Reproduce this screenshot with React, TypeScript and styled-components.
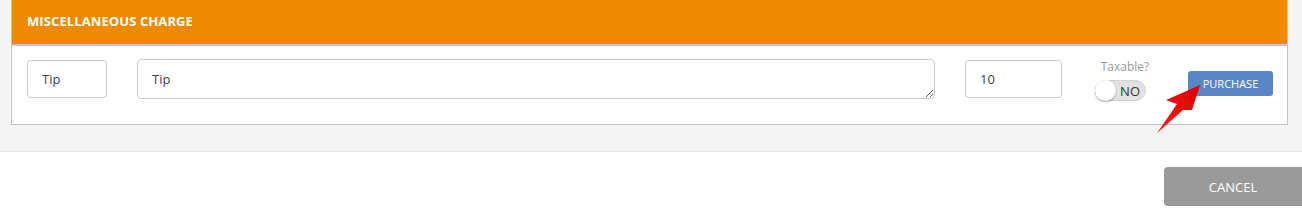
import styled, { createGlobalStyle } from 'styled-components';

const GlobalStyle = createGlobalStyle`
    html, body {
        margin: 0;
        padding: 0;
        background: #ffffff;
        font-family: 'Open Sans', 'Liberation Sans', sans-serif;
    }
`;

const Page = styled.div`
    position: relative;
    width: 1302px;
    height: 218px;
    overflow: hidden;
`;

const Section = styled.div`
    background: #f4f4f4;
    padding: 0 14px 26px 11px;
    border-bottom: 1px solid #e6e6e6;
`;

const Panel = styled.div`
    background: #ffffff;
    border: 1px solid #c4c4c4;
    border-top: none;
`;

const Header = styled.div`
    box-sizing: border-box;
    height: 46px;
    background: #ef8900;
    border-bottom: 2px solid #c4c4c4;
    display: flex;
    align-items: center;
    padding: 0 15px 3px;
    color: #ffffff;
    font-size: 13px;
    font-weight: 700;
    letter-spacing: 0.1px;
`;

const Row = styled.div`
    display: flex;
    align-items: flex-start;
    padding: 13px 14px 23px 15px;

    & > * {
        flex-shrink: 0;
    }
`;

const TextInput = styled.input<{ $width: number; $ml?: number }>`
    box-sizing: border-box;
    width: ${(p) => p.$width}px;
    height: 38px;
    margin-top: 1px;
    margin-left: ${(p) => p.$ml ?? 0}px;
    border: 1px solid #cccccc;
    border-radius: 4px;
    padding: 0 14px;
    font-family: inherit;
    font-size: 13px;
    color: #444444;
    outline: none;
`;

const TextArea = styled.textarea`
    box-sizing: border-box;
    width: 798px;
    height: 40px;
    margin: 0 0 0 30px;
    border: 1px solid #cccccc;
    border-radius: 4px;
    padding: 10px 14px;
    font-family: inherit;
    font-size: 13px;
    color: #444444;
    outline: none;
    resize: both;
`;

const Taxable = styled.div`
    width: 54px;
    margin-left: 33px;
    display: flex;
    flex-direction: column;
    align-items: center;
`;

const TaxLabel = styled.span`
    font-size: 12px;
    color: #9a9a9a;
    margin-left: 6px;
    line-height: 16px;
`;

const Toggle = styled.div`
    box-sizing: border-box;
    align-self: flex-start;
    margin-top: 5px;
    width: 51px;
    height: 21px;
    border-radius: 11px;
    background: #e2e2e2;
    border: 1px solid #d2d2d2;
    position: relative;
    display: flex;
    align-items: center;
    justify-content: flex-end;
    padding-right: 5px;
    font-size: 13px;
    color: #333333;
`;

const Knob = styled.span`
    position: absolute;
    left: -1px;
    top: -1px;
    width: 21px;
    height: 21px;
    border-radius: 50%;
    background: #ffffff;
    box-shadow: 0 1px 2px rgba(0, 0, 0, 0.35);
`;

const PurchaseButton = styled.button`
    width: 85px;
    height: 25px;
    margin-top: 12px;
    margin-left: auto;
    border: none;
    border-radius: 3px;
    background: #5a86c6;
    color: #ffffff;
    font-family: inherit;
    font-size: 11px;
    padding: 0;
`;

const Footer = styled.div`
    display: flex;
    justify-content: flex-end;
    padding-top: 15px;
`;

const CancelButton = styled.button`
    width: 138px;
    height: 39px;
    border: none;
    border-radius: 4px 0 0 4px;
    background: #9a9a9a;
    color: #ffffff;
    font-family: inherit;
    font-size: 13px;
    padding: 0;
`;

const Arrow = styled.svg`
    position: absolute;
    left: 1150px;
    top: 80px;
`;

export default function App() {
    return (
        <Page>
            <GlobalStyle />
            <Section>
                <Panel>
                    <Header>MISCELLANEOUS CHARGE</Header>
                    <Row>
                        <TextInput $width={80} defaultValue="Tip" />
                        <TextArea rows={1} defaultValue="Tip" />
                        <TextInput $width={97} $ml={30} defaultValue="10" />
                        <Taxable>
                            <TaxLabel>Taxable?</TaxLabel>
                            <Toggle>
                                <Knob />
                                NO
                            </Toggle>
                        </Taxable>
                        <PurchaseButton>PURCHASE</PurchaseButton>
                    </Row>
                </Panel>
            </Section>
            <Footer>
                <CancelButton>CANCEL</CancelButton>
            </Footer>
            <Arrow width="56" height="56" viewBox="0 0 56 56">
                <defs>
                    <linearGradient id="ar" x1="0" y1="1" x2="1" y2="0">
                        <stop offset="0" stopColor="#ff1a1a" />
                        <stop offset="1" stopColor="#d80000" />
                    </linearGradient>
                </defs>
                <polygon
                    points="50,5 42,30 33,30 7,53 27,24 16,20"
                    fill="url(#ar)"
                />
            </Arrow>
        </Page>
    );
}
